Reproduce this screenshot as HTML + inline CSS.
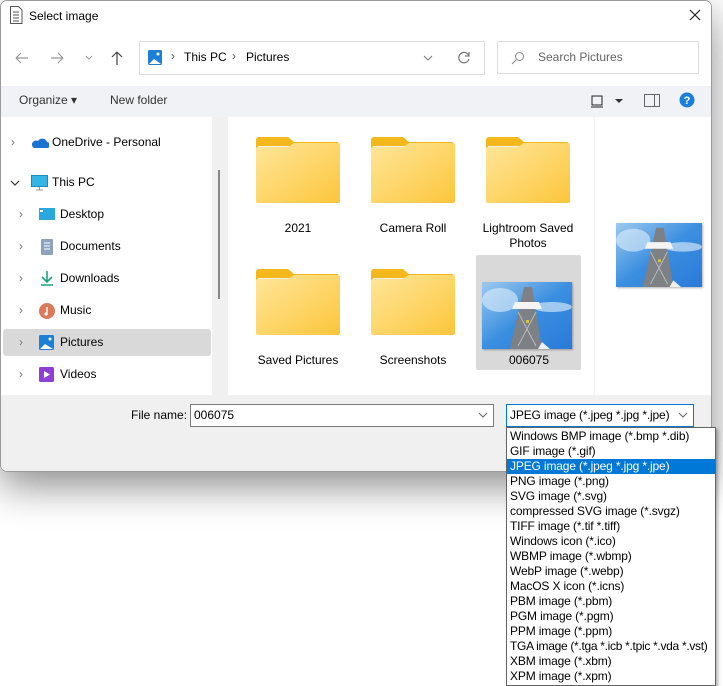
<!DOCTYPE html>
<html><head><meta charset="utf-8"><style>
*{box-sizing:border-box;margin:0;padding:0}
body{width:723px;height:686px;background:#fff;font-family:"Liberation Sans",sans-serif;font-size:12px;color:#000;position:relative;overflow:hidden}
.abs{position:absolute}
.dlg{left:0;top:0;width:712px;height:472px;background:#fff;border-radius:7px;overflow:hidden;box-shadow:0 14px 40px rgba(0,0,0,.45);z-index:1}
.dlg::after{content:"";position:absolute;left:0;top:0;right:0;bottom:0;border:1px solid #9a9a9a;border-radius:7px;z-index:50;pointer-events:none}
.t{position:absolute;white-space:nowrap}
.nav .t{font-size:12px}
.fold{position:absolute;width:84px;height:66px}
.lbl{position:absolute;width:110px;text-align:center;font-size:12px}
.list{z-index:100}
.list div{height:15px;line-height:15px;padding-left:3px;font-size:12px;white-space:nowrap;letter-spacing:-0.15px}
</style></head><body>
<div class="abs dlg">
  <svg class="abs" style="left:9px;top:6px" width="14" height="18" viewBox="0 0 14 18"><path d="M1.5 .5h8l3.5 3.5v13.5h-11.5z" fill="#fff" stroke="#555"/><path d="M4 6h6M4 9h6M4 12h6M4 15h6" stroke="#555"/></svg>
  <div class="t" style="left:29px;top:9px;font-size:12px">Select image</div>
  <svg class="abs" style="left:689px;top:9px" width="12" height="12"><path d="M1 1l10 10M11 1L1 11" stroke="#222" stroke-width="1.2"/></svg>
  <svg class="abs" style="left:13px;top:50px" width="120" height="16"><g stroke="#999" fill="none" stroke-width="1.2"><path d="M3 8h12M3 8l5-5M3 8l5 5"/><path d="M38 8h12M50 8l-5-5M50 8l-5 5"/><path d="M73 6l3 3 3-3" stroke-width="1"/></g><path d="M104 2v13M104 2l-5 5M104 2l5 5" stroke="#444" fill="none" stroke-width="1.2"/></svg>
  <div class="abs" style="left:139px;top:41px;width:346px;height:34px;border:1px solid #ddd"></div>
  <svg class="abs" style="left:148px;top:50px" width="14" height="15"><rect width="14" height="15" rx="1.5" fill="#1e7fd8"/><path d="M1 14l5-5 7 5z" fill="#fff"/><circle cx="10" cy="4" r="1.5" fill="#fff"/></svg>
  <div class="t" style="left:171px;top:49px;color:#555">›</div>
  <div class="t" style="left:184px;top:50px">This PC</div>
  <div class="t" style="left:232px;top:49px;color:#555">›</div>
  <div class="t" style="left:246px;top:50px">Pictures</div>
  <svg class="abs" style="left:423px;top:54px" width="10" height="8"><path d="M1 2l4 4 4-4" stroke="#777" fill="none"/></svg>
  <svg class="abs" style="left:457px;top:51px" width="14" height="14"><path d="M11.5 4A5.2 5.2 0 1 0 12 8" stroke="#777" fill="none" stroke-width="1.2"/><path d="M12 1v4H8" stroke="#777" fill="none" stroke-width="1.2"/></svg>
  <div class="abs" style="left:497px;top:41px;width:202px;height:33px;border:1px solid #ddd"></div>
  <svg class="abs" style="left:511px;top:51px" width="14" height="14"><circle cx="8.5" cy="5.5" r="4" stroke="#888" fill="none"/><path d="M5.5 8.5L1 13" stroke="#888"/></svg>
  <div class="t" style="left:538px;top:50px;color:#666">Search Pictures</div>
  <div class="abs" style="left:0;top:86px;width:712px;height:31px;background:#f0f2f5"></div>
  <div class="t" style="left:19px;top:93px;color:#333">Organize ▾</div>
  <div class="t" style="left:110px;top:93px;color:#333">New folder</div>
  <svg class="abs" style="left:590px;top:94px" width="36" height="14"><rect x="2" y="2" width="10" height="9" stroke="#222" fill="none"/><path d="M1 13h12" stroke="#222"/><path d="M25 5h8l-4 4z" fill="#333"/></svg>
  <svg class="abs" style="left:644px;top:94px" width="16" height="13"><rect x=".5" y=".5" width="15" height="12" stroke="#666" fill="none"/><path d="M10.5 1v11" stroke="#666"/></svg>
  <svg class="abs" style="left:679px;top:92px" width="16" height="16"><circle cx="8" cy="8" r="7.5" fill="#1e7fd8"/><text x="8" y="12" font-size="11" font-weight="bold" fill="#fff" text-anchor="middle" font-family="Liberation Sans">?</text></svg>
  <div class="abs" style="left:212px;top:117px;width:16px;height:278px;background:#f0f0f0"></div>
  <div class="abs" style="left:218px;top:170px;width:2px;height:129px;background:#888"></div>
  <div class="abs" style="left:3px;top:329px;width:208px;height:27px;background:#d9d9d9;border-radius:3px"></div>
  <div class="nav">
    <div class="t" style="left:11px;top:135px;color:#777">›</div>
    <svg class="abs" style="left:31px;top:137px" width="18" height="12"><path d="M3 11h13a3 3 0 0 0 0-6 5 5 0 0 0-9-1 4 4 0 0 0-4 7z" fill="#1a73d1"/></svg>
    <div class="t" style="left:52px;top:135px">OneDrive - Personal</div>
    <svg class="abs" style="left:10px;top:179px" width="10" height="8"><path d="M1 2l4 4 4-4" stroke="#333" fill="none" stroke-width="1.2"/></svg>
    <svg class="abs" style="left:31px;top:175px" width="17" height="16"><rect x=".5" y=".5" width="16" height="11" fill="#33b6e6" stroke="#1a8bb8"/><path d="M8.5 12v3M5 15h7" stroke="#999"/></svg>
    <div class="t" style="left:52px;top:175px">This PC</div>
    <div class="t" style="left:19px;top:207px;color:#777">›</div>
    <svg class="abs" style="left:39px;top:208px" width="16" height="13"><rect width="16" height="12" fill="#2aa6e0"/><rect x="1" y="2" width="3" height="2" fill="#fff"/></svg>
    <div class="t" style="left:60px;top:207px">Desktop</div>
    <div class="t" style="left:19px;top:239px;color:#777">›</div>
    <svg class="abs" style="left:41px;top:239px" width="12" height="16"><rect width="12" height="16" rx="1" fill="#8da3bd"/><path d="M3 4h6M3 7h6M3 10h6" stroke="#fff"/></svg>
    <div class="t" style="left:60px;top:239px">Documents</div>
    <div class="t" style="left:19px;top:271px;color:#777">›</div>
    <svg class="abs" style="left:40px;top:270px" width="14" height="16"><path d="M7 1v10M2 7l5 5 5-5M1 15h12" stroke="#1aa57d" fill="none" stroke-width="1.6"/></svg>
    <div class="t" style="left:60px;top:271px">Downloads</div>
    <div class="t" style="left:19px;top:303px;color:#777">›</div>
    <svg class="abs" style="left:39px;top:303px" width="16" height="16"><circle cx="8" cy="8" r="8" fill="#d97a5c"/><path d="M8 4v7" stroke="#fff" stroke-width="1.4"/><circle cx="7" cy="11" r="1.6" fill="#fff"/></svg>
    <div class="t" style="left:60px;top:303px">Music</div>
    <div class="t" style="left:19px;top:335px;color:#777">›</div>
    <svg class="abs" style="left:39px;top:335px" width="15" height="15"><rect width="15" height="15" rx="1.5" fill="#1e7fd8"/><path d="M1 14l5-5 8 5z" fill="#fff"/><circle cx="11" cy="4" r="1.5" fill="#fff"/></svg>
    <div class="t" style="left:60px;top:335px">Pictures</div>
    <div class="t" style="left:19px;top:367px;color:#777">›</div>
    <svg class="abs" style="left:39px;top:367px" width="15" height="15"><rect width="15" height="15" rx="1.5" fill="#8e3fd6"/><path d="M5 4l6 3.5-6 3.5z" fill="#fff"/></svg>
    <div class="t" style="left:60px;top:367px">Videos</div>
  </div>
  <div class="abs" style="left:594px;top:117px;width:1px;height:278px;background:#f0f0f0"></div>
  <svg width="0" height="0" style="position:absolute"><defs>
    <linearGradient id="fg" x1="0" y1="0" x2="1" y2="1"><stop offset="0" stop-color="#ffe69a"/><stop offset="1" stop-color="#fcc63b"/></linearGradient>
    <linearGradient id="sky" x1="0" y1="0" x2="1" y2="1"><stop offset="0" stop-color="#9cc9ef"/><stop offset=".5" stop-color="#3b8fe0"/><stop offset="1" stop-color="#2a7ad8"/></linearGradient>
    <symbol id="folder" viewBox="0 0 84 66"><path d="M2 0h30l6 5h44v10H0V2z" fill="#f4b81c"/><rect x="2" y="9" width="34" height="6" fill="#f0f0f0"/><path d="M0 12q0-2 2-2h30l6-4h44q2 0 2 2v56q0 2-2 2H2q-2 0-2-2z" fill="url(#fg)"/></symbol>
    <symbol id="photo" viewBox="0 0 90 67"><rect width="90" height="67" fill="url(#sky)"/><ellipse cx="18" cy="18" rx="18" ry="12" fill="#dfeefa" opacity=".6"/><ellipse cx="70" cy="25" rx="20" ry="5" fill="#e8f2fb" opacity=".6"/><path d="M42 5h8l10 62H28z" fill="#7d8085"/><path d="M33 20h24l3 7H30z" fill="#f4f4f4"/><path d="M36 30l18 34M54 30L36 64" stroke="#bbb"/><rect x="44" y="38" width="3" height="3" fill="#e0c040"/><path d="M60 60l8 7H56z" fill="#eee"/></symbol>
  </defs></svg>
  <svg class="fold" style="left:256px;top:137px"><use href="#folder"/></svg>
  <svg class="fold" style="left:371px;top:137px"><use href="#folder"/></svg>
  <svg class="fold" style="left:486px;top:137px"><use href="#folder"/></svg>
  <svg class="fold" style="left:256px;top:269px"><use href="#folder"/></svg>
  <svg class="fold" style="left:371px;top:269px"><use href="#folder"/></svg>
  <div class="lbl" style="left:243px;top:221px">2021</div>
  <div class="lbl" style="left:358px;top:221px">Camera Roll</div>
  <div class="lbl" style="left:473px;top:221px;line-height:15px">Lightroom Saved<br>Photos</div>
  <div class="lbl" style="left:243px;top:353px">Saved Pictures</div>
  <div class="lbl" style="left:358px;top:353px">Screenshots</div>
  <div class="abs" style="left:476px;top:255px;width:105px;height:115px;background:#d9d9d9;border-radius:2px"></div>
  <svg class="abs" style="left:482px;top:282px;box-shadow:1px 1px 2px rgba(0,0,0,.3)" width="90" height="67"><use href="#photo"/></svg>
  <div class="lbl" style="left:474px;top:353px">006075</div>
  <svg class="abs" style="left:616px;top:223px;box-shadow:1px 1px 2px rgba(0,0,0,.3)" width="86" height="64" viewBox="0 0 90 67" preserveAspectRatio="none"><use href="#photo"/></svg>
  <div class="abs" style="left:0;top:395px;width:712px;height:77px;background:#f0f0f0"></div>
  <div class="t" style="left:131px;top:408px">File name:</div>
  <div class="abs" style="left:190px;top:404px;width:304px;height:23px;background:#fff;border:1px solid #7a7a7a"></div>
  <div class="t" style="left:194px;top:408px">006075</div>
  <svg class="abs" style="left:478px;top:411px" width="10" height="8"><path d="M1 2l4 4 4-4" stroke="#666" fill="none"/></svg>
  <div class="abs" style="left:506px;top:404px;width:188px;height:23px;background:#fff;border:1px solid #0078d7"></div>
  <div class="t" style="left:510px;top:408px;letter-spacing:-0.15px">JPEG image (*.jpeg *.jpg *.jpe)</div>
  <svg class="abs" style="left:678px;top:411px" width="10" height="8"><path d="M1 2l4 4 4-4" stroke="#666" fill="none"/></svg>
</div>
<div class="abs list" style="left:506px;top:427px;width:210px;height:259px;background:#fff;border:1px solid #646464;box-shadow:2px 2px 3px rgba(0,0,0,.3);padding-top:1px">
  <div>Windows BMP image (*.bmp *.dib)</div>
  <div>GIF image (*.gif)</div>
  <div style="background:#0078d7;color:#fff">JPEG image (*.jpeg *.jpg *.jpe)</div>
  <div>PNG image (*.png)</div>
  <div>SVG image (*.svg)</div>
  <div>compressed SVG image (*.svgz)</div>
  <div>TIFF image (*.tif *.tiff)</div>
  <div>Windows icon (*.ico)</div>
  <div>WBMP image (*.wbmp)</div>
  <div>WebP image (*.webp)</div>
  <div>MacOS X icon (*.icns)</div>
  <div>PBM image (*.pbm)</div>
  <div>PGM image (*.pgm)</div>
  <div>PPM image (*.ppm)</div>
  <div style="letter-spacing:-0.3px">TGA image (*.tga *.icb *.tpic *.vda *.vst)</div>
  <div>XBM image (*.xbm)</div>
  <div>XPM image (*.xpm)</div>
</div>
</body></html>
